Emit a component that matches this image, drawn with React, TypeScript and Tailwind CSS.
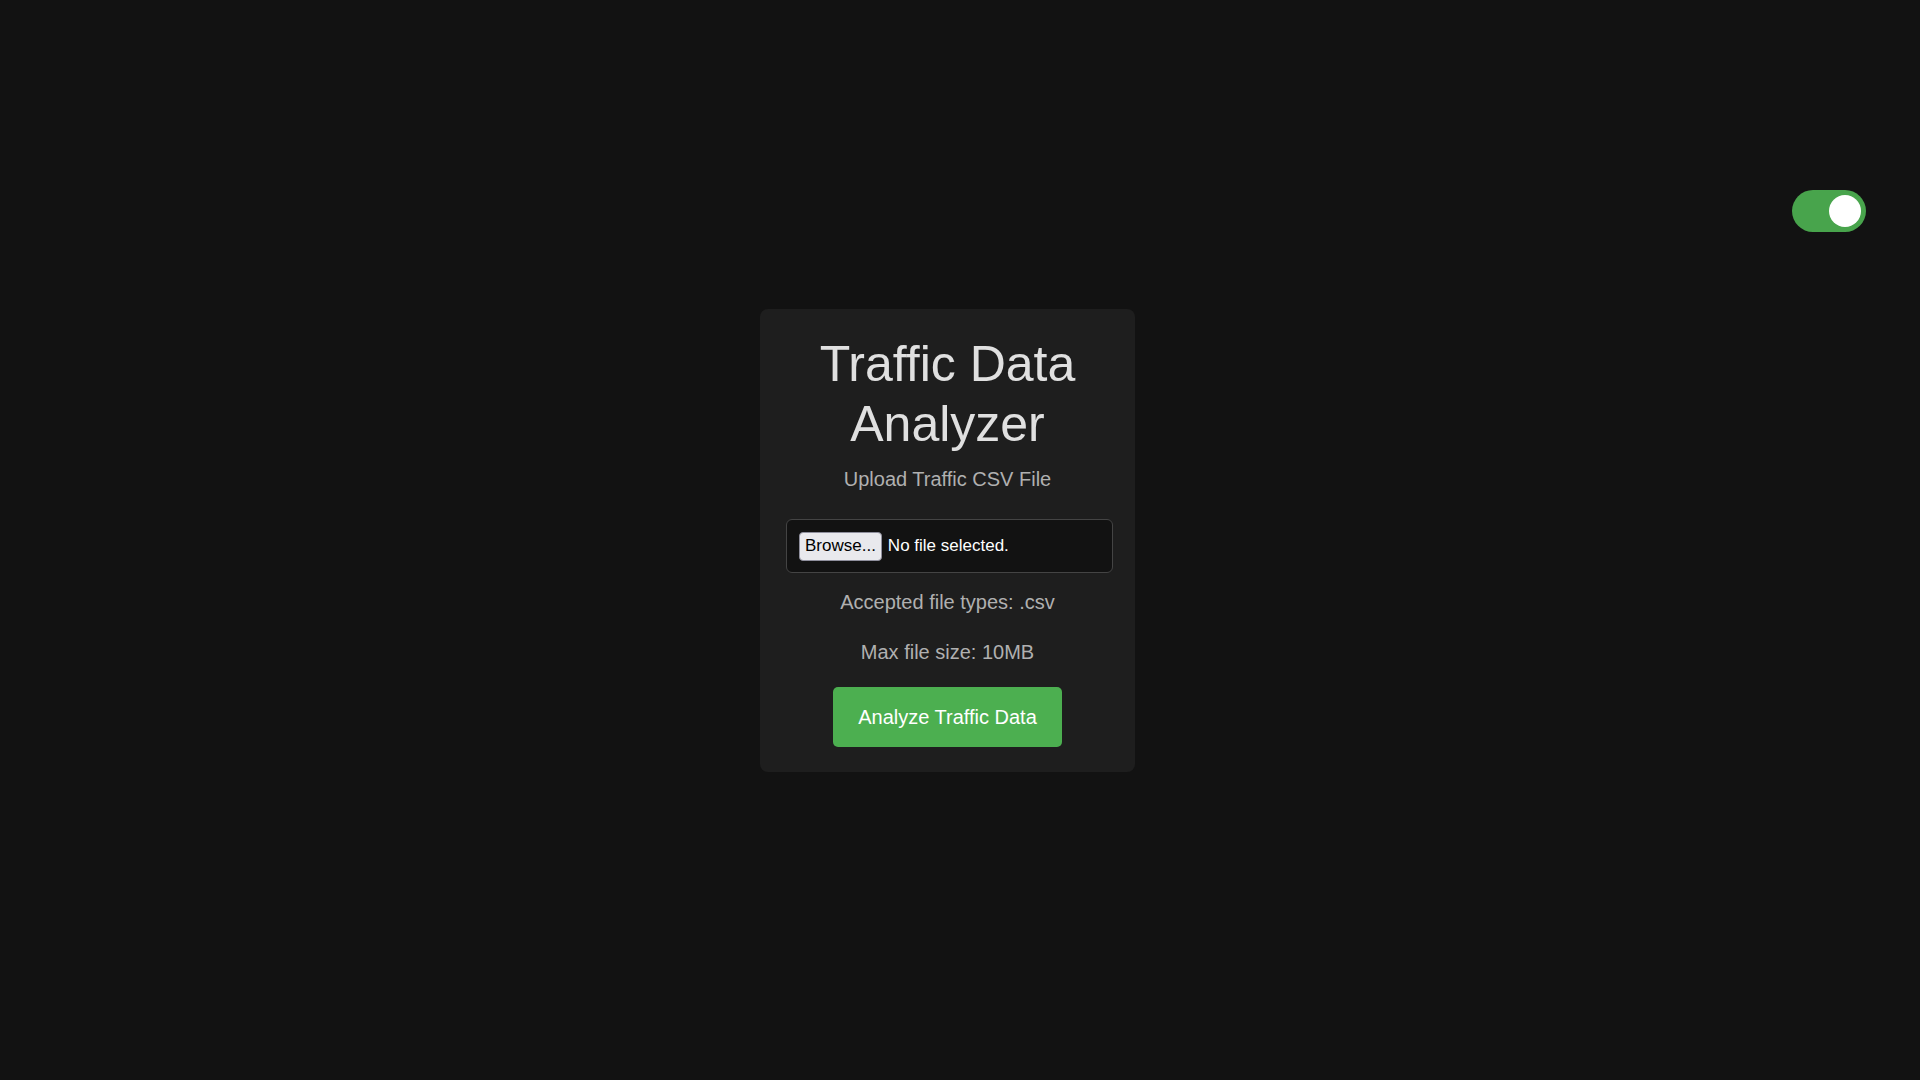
export default function App() {
  return (
    <div
      className="relative w-full h-[1080px] bg-[#121212] flex items-center justify-center pr-[25px]"
      style={{ fontFamily: '"Liberation Sans", Arial, sans-serif' }}
    >
      <div className="absolute top-[190px] right-[54px] w-[74px] h-[42px] rounded-full bg-[#48a44c] flex items-center justify-end pr-[5px]">
        <div className="w-[32px] h-[32px] rounded-full bg-white" />
      </div>

      <div className="w-[375px] bg-[#1e1e1e] rounded-[8px] px-[24px] pt-[25px] pb-[25px] flex flex-col items-center text-center">
        <h1 className="text-[50px] leading-[60px] text-[#e0e0e0] font-normal">
          Traffic Data
          <br />
          Analyzer
        </h1>
        <p className="mt-[14px] text-[20px] leading-[23px] text-[#b0b0b0]">Upload Traffic CSV File</p>
        <div className="mt-[28px] self-start shrink-0 ml-[2px] w-[327px] h-[54px] border border-[#444] rounded-[6px] bg-[#121212] flex items-center pl-[12px] pt-[1px]">
          <span className="h-[29px] px-[5px] flex items-center bg-[#e9e9ed] border border-[#8f8f9d] rounded-[4px] text-[17px] text-black">
            Browse...
          </span>
          <span className="ml-[6px] text-[17px] text-white">No file selected.</span>
        </div>
        <p className="mt-[18px] text-[20px] leading-[23px] text-[#b0b0b0]">Accepted file types: .csv</p>
        <p className="mt-[27px] text-[20px] leading-[23px] text-[#b0b0b0]">Max file size: 10MB</p>
        <button className="mt-[23px] w-[229px] h-[60px] rounded-[5px] bg-[#4caf50] text-white text-[20px]">
          Analyze Traffic Data
        </button>
      </div>
    </div>
  );
}
